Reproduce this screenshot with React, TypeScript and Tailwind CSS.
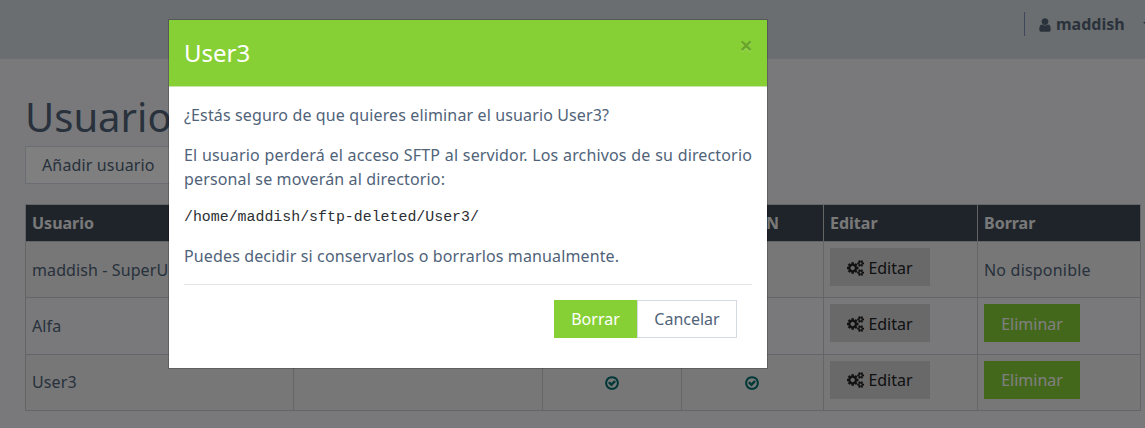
import React from "react";

const USER =
  "M1536 1399q0 109-62.5 187t-150.5 78h-854q-88 0-150.5-78t-62.5-187q0-85 8.5-160.5t31.5-152 58.5-131 94-89 134.5-34.5q131 128 313 128t313-128q76 0 134.5 34.5t94 89 58.5 131 31.5 152 8.5 160.5zm-256-887q0 159-112.5 271.5t-271.5 112.5-271.5-112.5-112.5-271.5 112.5-271.5 271.5-112.5 271.5 112.5 112.5 271.5z";
const COGS =
  "M832 896q0-106-75-181t-181-75-181 75-75 181 75 181 181 75 181-75 75-181zm768 512q0-52-38-90t-90-38-90 38-38 90q0 53 37.5 90.5t90.5 37.5 90.5-37.5 37.5-90.5zm0-1024q0-52-38-90t-90-38-90 38-38 90q0 53 37.5 90.5t90.5 37.5 90.5-37.5 37.5-90.5zm-384 421v185q0 10-7 19.5t-16 10.5l-155 24q-11 35-32 76 34 48 90 115 7 11 7 20 0 12-7 19-23 30-82.5 89.5t-78.5 59.5q-11 0-21-7l-115-90q-37 19-77 31-11 108-23 155-7 24-30 24h-186q-11 0-20-7.5t-10-17.5l-23-153q-34-10-75-31l-118 89q-7 7-20 7-11 0-21-8-144-133-144-160 0-9 7-19 10-14 41-53t47-61q-23-44-35-82l-152-24q-10-1-17-9.5t-7-19.5v-185q0-10 7-19.5t16-10.5l155-24q11-35 32-76-34-48-90-115-7-11-7-20 0-12 7-20 22-30 82-89t79-59q11 0 21 7l115 90q34-18 77-32 11-108 23-154 7-24 30-24h186q11 0 20 7.5t10 17.5l23 153q34 10 75 31l118-89q8-7 20-7 11 0 21 8 144 133 144 160 0 8-7 19-12 16-42 54t-45 60q23 48 34 82l152 23q10 2 17 10.5t7 19.5zm640 533v140q0 16-149 31-12 27-30 52 51 113 51 138 0 4-4 7-122 71-124 71-8 0-46-47t-52-68q-20 2-30 2t-30-2q-14 21-52 68t-46 47q-2 0-124-71-4-3-4-7 0-25 51-138-18-25-30-52-149-15-149-31v-140q0-16 149-31 13-29 30-52-51-113-51-138 0-4 4-7 4-2 35-20t59-34 30-16q8 0 46 46.5t52 67.5q20-2 30-2t30 2q51-71 92-112l6-2q4 0 124 70 4 3 4 7 0 25-51 138 17 23 30 52 149 15 149 31zm0-1024v140q0 16-149 31-12 27-30 52 51 113 51 138 0 4-4 7-122 71-124 71-8 0-46-47t-52-68q-20 2-30 2t-30-2q-14 21-52 68t-46 47q-2 0-124-71-4-3-4-7 0-25 51-138-18-25-30-52-149-15-149-31v-140q0-16 149-31 13-29 30-52-51-113-51-138 0-4 4-7 4-2 35-20t59-34 30-16q8 0 46 46.5t52 67.5q20-2 30-2t30 2q51-71 92-112l6-2q4 0 124 70 4 3 4 7 0 25-51 138 17 23 30 52 149 15 149 31z";
const CHECK =
  "M1299 813l-422 422q-19 19-45 19t-45-19l-294-294q-19-19-19-45t19-45l102-102q19-19 45-19t45 19l147 147 275-275q19-19 45-19t45 19l102 102q19 19 19 45t-19 45zm141 83q0-148-73-273t-198-198-273-73-273 73-198 198-73 273 73 273 198 198 273 73 273-73 198-198 73-273zm224 0q0 209-103 385.5t-279.5 279.5-385.5 103-385.5-103-279.5-279.5-103-385.5 103-385.5 279.5-279.5 385.5-103 385.5 103 279.5 279.5 103 385.5z";

function EditButton({ pad }: { pad: string }) {
  return (
    <button className={"flex h-[38px] w-[100px] items-center justify-center gap-[4px] bg-[#d2d2d2] text-[#222] " + pad}>
      <svg className="h-4 w-[17px] shrink-0" viewBox="-64 0 1920 1792" fill="currentColor" stroke="currentColor" strokeWidth="25">
        <path d={COGS} />
      </svg>
      Editar
    </button>
  );
}

function Check() {
  return (
    <svg className="mx-auto size-4 text-[#007070]" viewBox="0 0 1792 1792" fill="currentColor">
      <path d={CHECK} />
    </svg>
  );
}

const rows = [
  { name: "maddish - SuperUser", removable: false, style: "h-[56px] bg-[#eeeeee]", pad: "pt-px", namePad: "pb-0" },
  { name: "Alfa", removable: true, style: "h-[57px]", pad: "pt-px", namePad: "pb-0" },
  { name: "User3", removable: true, style: "h-[56px] bg-[#eeeeee]", pad: "pb-px", namePad: "pb-[2px]" },
];

const cell = "border border-[#c8cacc] px-[6px]";

export default function App() {
  return (
    <div className="relative h-[428px] w-[1145px] overflow-hidden bg-[#f2f3f6] font-['Noto_Sans','Open_Sans',sans-serif] text-[16px] leading-6 text-[#506379]">
      <header className="flex h-[59px] items-start justify-end bg-[#d6dce0] pt-3">
        <div className="flex h-6 w-[121px] items-center border-l border-[#8090b0] pl-[12px] font-bold text-[#546478]">
          <svg className="mr-[3px] mt-[2px] h-4 w-4 shrink-0" viewBox="60 0 1672 1792" fill="currentColor">
            <path d={USER} />
          </svg>
          <span>maddish</span>
          <svg className="ml-[18px] h-1 w-2 shrink-0" viewBox="0 0 8 4" fill="currentColor">
            <path d="M0 0h8L4 4z" />
          </svg>
        </div>
      </header>

      <main className="pl-[25px]">
        <h1 className="pt-[34px] text-[40px] leading-[48px]">Usuarios</h1>
        <button className="mt-[5px] block h-[38px] border border-[#d4dae4] bg-white px-4 tracking-[0.14px]">
          Añadir usuario
        </button>
        <table className="mt-[20px] w-[1116px] table-fixed border-collapse">
          <colgroup>
            <col className="w-[268px]" />
            <col className="w-[249px]" />
            <col className="w-[139px]" />
            <col className="w-[142px]" />
            <col className="w-[154px]" />
            <col className="w-[163px]" />
          </colgroup>
          <thead>
            <tr className="h-[37px] bg-[#3e4856] text-left font-bold text-[#f2f2f2]">
              <th className={cell}>Usuario</th>
              <th className={cell}></th>
              <th className={cell}></th>
              <th className={cell}>
                <span className="block w-[91px] text-right">N</span>
              </th>
              <th className={cell}>Editar</th>
              <th className={cell}>Borrar</th>
            </tr>
          </thead>
          <tbody>
            {rows.map((row) => (
              <tr key={row.name} className={row.style}>
                <td className={cell + " tracking-[0.1px] " + row.namePad}>{row.name}</td>
                <td className={cell}></td>
                <td className={cell}>
                  <Check />
                </td>
                <td className={cell + " pr-[8px]"}>
                  <Check />
                </td>
                <td className={cell + " pt-[6px] align-top"}>
                  <EditButton pad={row.pad} />
                </td>
                <td className={row.removable ? cell + " pt-[6px] align-top" : cell + " tracking-[0.2px]"}>
                  {row.removable ? (
                    <button className={"block h-[38px] w-24 bg-[#86d036] text-white " + row.pad}>Eliminar</button>
                  ) : (
                    "No disponible"
                  )}
                </td>
              </tr>
            ))}
          </tbody>
        </table>
      </main>

      <div className="absolute inset-0 flex items-start bg-black/50 pl-[168px] pt-[19px]">
        <section className="h-[350px] w-[600px] border border-black/20 bg-white bg-clip-padding">
          <div className="flex h-[67px] items-start justify-between border-b border-[#c9e4ae] bg-[#86d036] pl-[15px] pr-[14px] pt-[14px]">
            <h4 className="pt-px text-[24px] leading-[36px] text-white">User3</h4>
            <button className="text-[24px] font-bold leading-[21px] text-black opacity-20 [text-shadow:0_1px_0_#fff]">×</button>
          </div>
          <div className="flex flex-col px-[15px] pt-4">
            <p className="tracking-[0.13px]">¿Estás seguro de que quieres eliminar el usuario User3?</p>
            <p className="mt-4 text-justify tracking-[0.15px]">
              El usuario perderá el acceso SFTP al servidor. Los archivos de su directorio personal se moverán al
              directorio:
            </p>
            <pre className="mt-[15px] font-['Liberation_Mono',monospace] text-[14.9px] leading-[22px] text-[#2b2f33]">
              /home/maddish/sftp-deleted/User3/
            </pre>
            <p className="mt-[16px] tracking-[0.135px]">Puedes decidir si conservarlos o borrarlos manualmente.</p>
            <div className="mt-4 flex justify-end border-t border-[#e5e5e5] pr-[15px] pt-[15px]">
              <button className="h-[38px] w-[83px] bg-[#86d036] text-white">Borrar</button>
              <button className="h-[38px] w-[100px] border border-[#d4dae4]">Cancelar</button>
            </div>
          </div>
        </section>
      </div>
    </div>
  );
}
